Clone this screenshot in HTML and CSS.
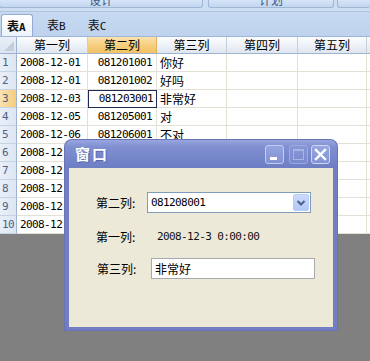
FILE: index.html
```html
<!DOCTYPE html>
<html>
<head>
<meta charset="utf-8">
<link rel="stylesheet" href="styles.css">
</head>
<body>
<div class="app">
  <div class="toolbar">
    <div class="tbtn b1"><span>设计</span></div>
    <div class="tbtn b2"><span>计划</span></div>
    <div class="tbtn b3"></div>
  </div>
  <div class="tabs">
    <div class="tab active">表<b>A</b></div>
    <div class="tab">表<span class="lt">B</span></div>
    <div class="tab">表<span class="lt">C</span></div>
  </div>
  <div class="grid">
    <div class="corner"><span class="tri"></span></div>
    <div class="ch">第一列</div><div class="ch sel">第二列</div><div class="ch">第三列</div><div class="ch">第四列</div><div class="ch">第五列</div><div class="ch"></div>

    <div class="rh">1</div><div class="c num">2008-12-01</div><div class="c num r">081201001</div><div class="c t">你好</div><div class="c"></div><div class="c"></div><div class="c"></div>
    <div class="rh">2</div><div class="c num">2008-12-01</div><div class="c num r">081201002</div><div class="c t">好吗</div><div class="c"></div><div class="c"></div><div class="c"></div>
    <div class="rh sel">3</div><div class="c num">2008-12-03</div><div class="c num r cur">081203001</div><div class="c t">非常好</div><div class="c"></div><div class="c"></div><div class="c"></div>
    <div class="rh">4</div><div class="c num">2008-12-05</div><div class="c num r">081205001</div><div class="c t">对</div><div class="c"></div><div class="c"></div><div class="c"></div>
    <div class="rh">5</div><div class="c num">2008-12-06</div><div class="c num r">081206001</div><div class="c t">不对</div><div class="c"></div><div class="c"></div><div class="c"></div>
    <div class="rh">6</div><div class="c num">2008-12-07</div><div class="c num r"></div><div class="c t"></div><div class="c"></div><div class="c"></div><div class="c"></div>
    <div class="rh">7</div><div class="c num">2008-12-08</div><div class="c num r"></div><div class="c t"></div><div class="c"></div><div class="c"></div><div class="c"></div>
    <div class="rh">8</div><div class="c num">2008-12-09</div><div class="c num r"></div><div class="c t"></div><div class="c"></div><div class="c"></div><div class="c"></div>
    <div class="rh">9</div><div class="c num">2008-12-10</div><div class="c num r"></div><div class="c t"></div><div class="c"></div><div class="c"></div><div class="c"></div>
    <div class="rh">10</div><div class="c num">2008-12-11</div><div class="c num r"></div><div class="c t"></div><div class="c"></div><div class="c"></div><div class="c"></div>
  </div>

  <div class="dialog">
    <div class="titlebar">
      <span class="title">窗口</span>
      <div class="wbtns">
        <div class="wb min"><span class="bar"></span></div>
        <div class="wb max"><span class="box"></span></div>
        <div class="wb close">
          <svg width="19" height="19" viewBox="0 0 19 19"><path d="M5 5 L14 14 M14 5 L5 14" stroke="#fff" stroke-width="2.4" stroke-linecap="square"/></svg>
        </div>
      </div>
    </div>
    <div class="dbody">
      <div class="frow r1">
        <span class="lbl w51">第二列:</span>
        <div class="combo">
          <span class="cval num">081208001</span>
          <div class="ddbtn">
            <svg width="16" height="17" viewBox="0 0 16 17"><path d="M4.5 7 L8 10.5 L11.5 7" stroke="#4d6185" stroke-width="2" fill="none"/></svg>
          </div>
        </div>
      </div>
      <div class="frow r2">
        <span class="lbl w61">第一列:</span>
        <span class="num val">2008-12-3 0:00:00</span>
      </div>
      <div class="frow r3">
        <span class="lbl w55">第三列:</span>
        <div class="tbox">非常好</div>
      </div>
    </div>
  </div>
</div>
</body>
</html>
```
FILE: styles.css
```css
* { box-sizing: border-box; }
html, body { margin: 0; padding: 0; }
body {
  background: #808080;
  font-family: "Noto Sans CJK SC", sans-serif;
  font-size: 12px;
  color: #000;
  width: 370px;
  height: 361px;
  overflow: hidden;
}
.app { position: relative; width: 370px; height: 361px; }

/* toolbar */
.toolbar {
  height: 12px;
  background: #cddef3;
  border-bottom: 1px solid #aec4df;
  display: flex;
  overflow: hidden;
}
.tbtn {
  height: 8px;
  background: linear-gradient(#d6e4f6, #c3d6ef);
  border: 1px solid #9fb6d4;
  border-top: none;
  border-radius: 0 0 3px 3px;
  overflow: hidden;
  text-align: center;
  color: #3d5a86;
}
.tbtn span { display: block; line-height: 12px; margin-top: -6px; }
.b1 { width: 204px; margin-left: -1px; }
.b2 { width: 126px; margin-left: 5px; }
.b3 { flex: 1; margin-left: 3px; border-right: none; }

/* tabs */
.tabs {
  height: 25px;
  background: linear-gradient(#c6d9f1, #bfd3ee);
  display: flex;
  align-items: flex-end;
  border-bottom: 1px solid #9fb7d6;
}
.tab {
  height: 22px;
  line-height: 21px;
  padding: 0 8px 0 14px;
  color: #111;
  font-size: 12px;
}
.tab .lt { font-family: "DejaVu Sans Mono", monospace; font-size: 11px; }
.tab.active {
  width: 32px;
  margin-left: 1px;
  padding: 0 0 0 5px;
  background: linear-gradient(#ffffff, #eef3fa);
  border: 1px solid #93acd0;
  border-bottom: none;
  border-radius: 3px 3px 0 0;
  font-weight: bold;
}
.tab.active b { font-family: "DejaVu Sans Mono", monospace; font-size: 11px; }

/* grid */
.grid {
  display: grid;
  grid-template-columns: 17px 71px 69px 70px 71px 69px 1fr;
  grid-template-rows: 17px repeat(10, 18px);
  background: #fff;
}
.corner {
  background: linear-gradient(#e9eff8, #dbe4f0);
  border-right: 1px solid #9db3cf;
  border-bottom: 1px solid #9db3cf;
  position: relative;
}
.tri {
  position: absolute;
  right: 2px;
  bottom: 2px;
  width: 0; height: 0;
  border-left: 10px solid transparent;
  border-bottom: 10px solid #c3cfdd;
}
.ch {
  background: linear-gradient(#fbfcfe, #eef2f8 50%, #dfe6ef);
  border-right: 1px solid #c4cfdc;
  border-bottom: 1px solid #9db3cf;
  text-align: center;
  line-height: 16px;
  font-size: 12px;
}
.ch.sel { background: linear-gradient(#fbe2b0, #f6cf7e 50%, #f2c164); border-right-color: #e0b060; }
.rh {
  background: linear-gradient(90deg, #e9eff8, #dde6f2);
  border-right: 1px solid #9db3cf;
  border-bottom: 1px solid #c5d3e4;
  color: #4f6283;
  font-family: "DejaVu Sans Mono", monospace;
  font-size: 11px;
  line-height: 17px;
  padding-left: 2px;
  letter-spacing: -0.5px;
}
.rh.sel { background: linear-gradient(90deg, #fbe2b0, #f5cd7c); }
.c {
  border-right: 1px solid #e3e0d5;
  border-bottom: 1px solid #e3e0d5;
  line-height: 17px;
  white-space: nowrap;
  overflow: hidden;
  padding-left: 3px;
}
.c.r { text-align: right; padding-right: 4px; padding-left: 0; }
.c.t { padding-left: 3px; }
.c.cur { border: 1px solid #1f2b52; line-height: 16px; padding-right: 3px; }
.num {
  font-family: "DejaVu Sans Mono", monospace;
  font-size: 11px;
  letter-spacing: -0.6px;
}

/* dialog */
.dialog {
  position: absolute;
  left: 65px;
  top: 140px;
  width: 272px;
  height: 190px;
  background: #737dc3;
  border-radius: 7px 7px 0 0;
  padding: 0 4px 3px;
  display: flex;
  flex-direction: column;
  box-shadow: 0 0 0 1px #6a73b4;
}
.titlebar {
  height: 28px;
  margin: 0 -4px;
  padding: 0 7px 0 10px;
  border-radius: 7px 7px 0 0;
  background: linear-gradient(#98a6e0, #7f8fd0 25%, #7484c9 70%, #6e7ec4);
  display: flex;
  align-items: center;
  justify-content: space-between;
}
.title {
  color: #fff;
  font-weight: bold;
  font-size: 15px;
  line-height: 18px;
  letter-spacing: 2px;
  text-shadow: 1px 1px 0 #5a68a8;
}
.wbtns { display: flex; gap: 3px; padding-top: 1px; }
.wb {
  width: 19px;
  height: 19px;
  border-radius: 3px;
  position: relative;
}
.wb.min { background: linear-gradient(#95a5e0, #8191d3); border: 1px solid #c3ccf0; margin-right: 2px; }
.wb.min .bar { position: absolute; left: 4px; bottom: 3px; width: 7px; height: 3px; background: #fff; }
.wb.max { background: linear-gradient(#8696d6, #7a8acd); border: 1px solid #9eaae0; }
.wb.max .box { position: absolute; left: 3px; top: 3px; width: 11px; height: 11px; border: 1px solid #a9b4e4; border-top-width: 2px; }
.wb.close { background: linear-gradient(#97a7e1, #8292d4); border: 1px solid #d0d7f3; }
.wb.close svg { position: absolute; left: -1px; top: -1px; }

.dbody {
  flex: 1;
  background: #ece9d8;
  padding: 24px 0 0 27px;
  display: flex;
  flex-direction: column;
}
.frow { display: flex; align-items: center; }
.r1 { height: 21px; }
.r2 { height: 16px; margin-top: 16px; }
.r3 { height: 21px; margin-top: 13px; }
.lbl { font-size: 12px; line-height: 16px; }
.w51 { width: 51px; }
.w61 { width: 61px; }
.w55 { width: 55px; padding-left: 1px; }
.combo {
  width: 164px;
  height: 21px;
  background: #fff;
  border: 1px solid #7f9db9;
  display: flex;
  align-items: center;
  justify-content: space-between;
  padding: 1px 1px 1px 3px;
}
.cval { line-height: 17px; }
.ddbtn {
  width: 16px;
  height: 17px;
  background: linear-gradient(#cbdafc, #b2c8f7);
  border: 1px solid #b9ccf5;
  border-radius: 2px;
  position: relative;
}
.ddbtn svg { position: absolute; left: -1px; top: -1px; }
.val { color: #111; line-height: 16px; }
.tbox {
  width: 164px;
  height: 21px;
  background: #fff;
  border: 1px solid #a7abb0;
  padding-left: 3px;
  line-height: 19px;
  font-size: 12px;
}
```
